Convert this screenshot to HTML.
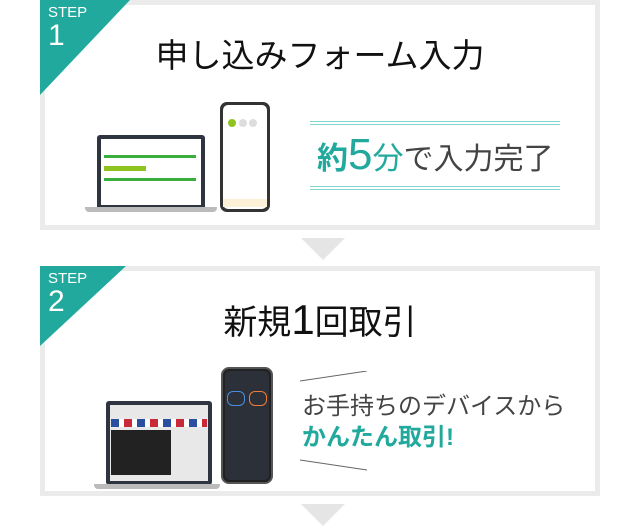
<!DOCTYPE html>
<html><head><meta charset="utf-8"><style>
*{margin:0;padding:0;box-sizing:border-box}
body{width:640px;height:531px;background:#fff;position:relative;overflow:hidden;font-family:"Liberation Sans","Noto Sans CJK JP",sans-serif}
.box{position:absolute;left:40px;width:560px;height:230px;border:5px solid #ebebeb;background:#fff}
.tri{position:absolute;left:-5px;top:-5px;width:0;height:0;border-top:80px solid #22a99d;border-right:86px solid transparent}
.step{position:absolute;left:3px;top:0px;color:#fff;font-size:15px;line-height:16px;font-weight:300}
.step b{display:block;font-weight:normal;font-size:30px;line-height:30px}
.arrow{position:absolute;left:301px;width:0;height:0;border-left:22px solid transparent;border-right:22px solid transparent;border-top:22px solid #e5e5e5}
.title{position:absolute;left:0;width:550px;text-align:center;color:#111;font-size:33px}
.abs{position:absolute}
</style></head><body>
<div class="box" style="top:0">
 <div class="tri" style="border-top-width:95px;border-right-width:90px"></div>
 <div class="step">STEP<b>1</b></div>
 <div class="title" style="top:24px">申し込みフォーム入力</div>
 <div class="abs" style="left:52px;top:130px;width:108px;height:75px;background:#2f3540;border-radius:3px"></div>
 <div class="abs" style="left:56px;top:134px;width:100px;height:66px;background:#fff"></div>
 <div class="abs" style="left:59px;top:150px;width:92px;height:3px;background:#3aae3a"></div>
 <div class="abs" style="left:59px;top:161px;width:42px;height:5px;background:#8fc31f"></div>
 <div class="abs" style="left:59px;top:173px;width:92px;height:3px;background:#3aae3a"></div>
 <div class="abs" style="left:40px;top:202px;width:132px;height:5px;background:#bbb;border-radius:0 0 4px 4px"></div>
 <div class="abs" style="left:175px;top:97px;width:50px;height:110px;background:#333;border-radius:7px"></div>
 <div class="abs" style="left:178px;top:100px;width:44px;height:104px;background:#fff;border-radius:5px"></div>
 <div class="abs" style="left:183px;top:114px;width:8px;height:8px;background:#8fc31f;border-radius:50%"></div>
 <div class="abs" style="left:194px;top:114px;width:8px;height:8px;background:#ddd;border-radius:50%"></div>
 <div class="abs" style="left:204px;top:114px;width:8px;height:8px;background:#ddd;border-radius:50%"></div>
 <div class="abs" style="left:178px;top:194px;width:44px;height:8px;background:#fdf1d8"></div>
 <div class="abs" style="left:265px;top:116px;width:250px;height:4px;border-top:1px solid #7fd6cf;border-bottom:1px solid #7fd6cf"></div>
 <div class="abs" style="left:265px;top:181px;width:250px;height:4px;border-top:1px solid #7fd6cf;border-bottom:1px solid #7fd6cf"></div>
 <div class="abs" style="left:272px;top:128px;white-space:nowrap;color:#444;font-size:30px;line-height:44px">
  <span style="color:#22a99d;font-weight:bold;font-size:31px">約</span><span style="color:#22a99d;font-size:44px">5</span><span style="color:#22a99d;font-size:31px">分</span>で入力完了</div>
</div>
<div class="arrow" style="top:238px"></div>

<div class="box" style="top:266px">
 <div class="tri"></div>
 <div class="step">STEP<b>2</b></div>
 <div class="title" style="top:24px;font-size:34px">新規<span style="font-size:42px">1</span>回取引</div>
 <div class="abs" style="left:61px;top:130px;width:106px;height:84px;background:#2f3540;border-radius:3px"></div>
 <div class="abs" style="left:65px;top:134px;width:98px;height:76px;background:#e8e8e8"></div>
 <div class="abs" style="left:66px;top:148px;width:96px;height:8px;background:repeating-linear-gradient(90deg,#2a4fa0 0 8px,#fff 8px 13px,#c92a3a 13px 21px,#fff 21px 26px)"></div>
 <div class="abs" style="left:66px;top:159px;width:60px;height:45px;background:#222"></div>
 <div class="abs" style="left:49px;top:213px;width:126px;height:5px;background:#bbb;border-radius:0 0 4px 4px"></div>
 <div class="abs" style="left:176px;top:96px;width:52px;height:117px;background:#222;border-radius:8px;border:2px solid #555"></div>
 <div class="abs" style="left:180px;top:100px;width:44px;height:109px;background:#2c3038;border-radius:5px"></div>
 <div class="abs" style="left:182px;top:120px;width:18px;height:15px;border:1px solid #4a8de0;border-radius:6px"></div>
 <div class="abs" style="left:204px;top:120px;width:18px;height:15px;border:1px solid #f07b3a;border-radius:6px"></div>
 <svg class="abs" style="left:255px;top:100px" width="80" height="110"><line x1="0" y1="10" x2="67" y2="0" stroke="#666" stroke-width="1"/><line x1="0" y1="89" x2="67" y2="99" stroke="#666" stroke-width="1"/></svg>
 <div class="abs" style="left:257px;top:120px;white-space:nowrap;color:#444;font-size:24px;line-height:31px">お手持ちのデバイスから<br><span style="color:#22a99d;font-weight:bold">かんたん取引!</span></div>
</div>
<div class="arrow" style="top:504px"></div>
</body></html>
